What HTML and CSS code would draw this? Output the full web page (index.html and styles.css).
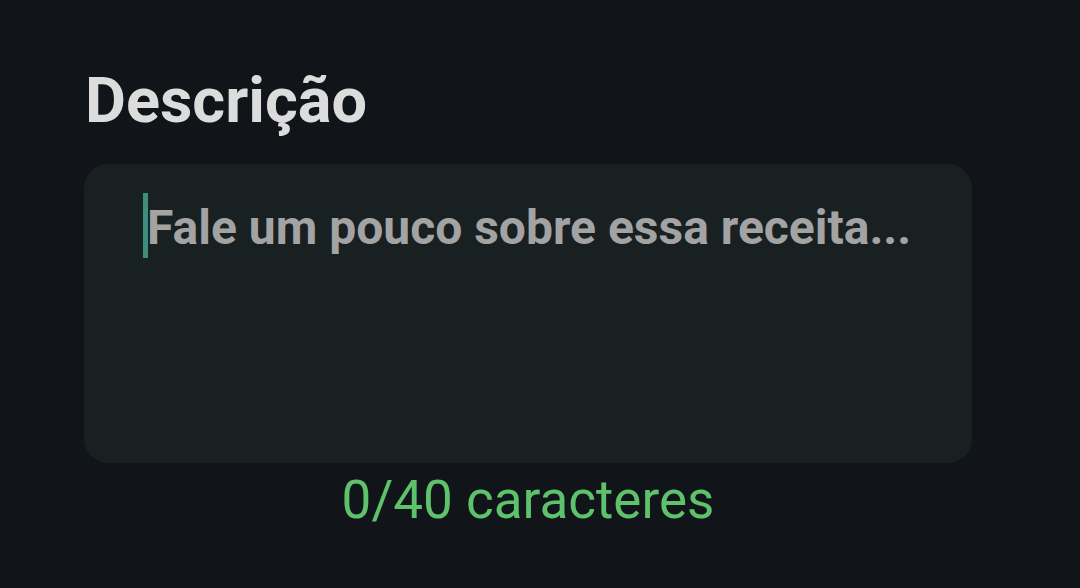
FILE: index.html
```html
<!DOCTYPE html>
<html lang="pt">
<head>
<meta charset="utf-8">
<link rel="stylesheet" href="styles.css">
</head>
<body>
<main class="field">
  <h1 class="label">Descrição</h1>
  <div class="box">
    <div class="input-line">
      <span class="caret"></span>
      <span class="placeholder">Fale um pouco sobre essa receita...</span>
    </div>
  </div>
  <p class="counter">0/40 caracteres</p>
</main>
</body>
</html>
```
FILE: styles.css
```css
html, body {
  margin: 0;
  padding: 0;
  background: #111418;
  width: 1080px;
  height: 588px;
  overflow: hidden;
  font-family: Roboto, "Liberation Sans", sans-serif;
}
.field {
  width: 888px;
  padding: 64px 0 0 84px;
  display: flex;
  flex-direction: column;
}
.label {
  margin: 0 0 0 1px;
  font-size: 63px;
  font-weight: 700;
  color: #dcdcdc;
  line-height: 74px;
}
.box {
  margin-top: 26px;
  height: 299px;
  background: #192022;
  border-radius: 24px;
  box-sizing: border-box;
  padding: 29px 0 0 59px;
}
.input-line {
  display: flex;
  align-items: flex-start;
}
.caret {
  width: 5px;
  height: 65px;
  background: #3f8e7c;
  flex-shrink: 0;
}
.placeholder {
  margin: 7px 0 0 -1px;
  font-size: 48px;
  font-weight: 700;
  line-height: 56px;
  color: #a3a3a3;
}
.counter {
  margin: 6px 0 0;
  text-align: center;
  font-size: 53px;
  color: #5ec26c;
  line-height: 62px;
}
```
